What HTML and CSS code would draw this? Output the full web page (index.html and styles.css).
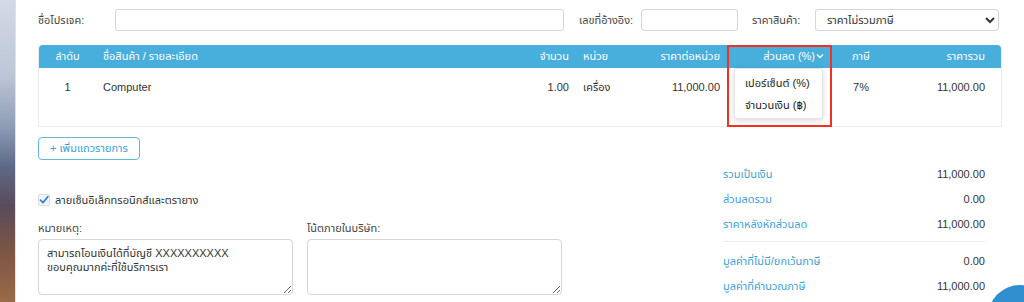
FILE: index.html
```html
<!DOCTYPE html>
<html lang="th">
<head>
    <meta charset="UTF-8">
    <meta name="viewport" content="width=device-width, initial-scale=1.0">
    <title>ใบเสนอราคา</title>
    <link rel="stylesheet" href="styles.css">
</head>
<body>
    <div class="page">
        <div class="backdrop"></div>

        <main class="card">
            <div class="doc-row">
                <label class="lbl lbl-project">ชื่อโปรเจค:</label>
                <input class="field field-project" type="text">
                <label class="lbl lbl-ref">เลขที่อ้างอิง:</label>
                <input class="field field-ref" type="text">
                <label class="lbl lbl-price">ราคาสินค้า:</label>
                <select class="field field-price">
                    <option>ราคาไม่รวมภาษี</option>
                </select>
            </div>

            <div class="items">
                <table class="items-table">
                    <colgroup>
                        <col style="width: 57px">
                        <col style="width: 425px">
                        <col style="width: 55px">
                        <col style="width: 55px">
                        <col style="width: 96px">
                        <col style="width: 104px">
                        <col style="width: 60px">
                        <col style="width: 110px">
                    </colgroup>
                    <thead>
                        <tr>
                            <th class="center">ลำดับ</th>
                            <th>ชื่อสินค้า / รายละเอียด</th>
                            <th class="right">จำนวน</th>
                            <th>หน่วย</th>
                            <th class="right">ราคาต่อหน่วย</th>
                            <th class="right">ส่วนลด (%)<svg class="chev" width="8" height="6" viewBox="0 0 8 6"><path d="M1 1.5 L4 4.5 L7 1.5" fill="none" stroke="#fff" stroke-width="1.4"/></svg></th>
                            <th class="center">ภาษี</th>
                            <th class="right last">ราคารวม</th>
                        </tr>
                    </thead>
                    <tbody>
                        <tr>
                            <td class="center">1</td>
                            <td>Computer</td>
                            <td class="right">1.00</td>
                            <td>เครื่อง</td>
                            <td class="right">11,000.00</td>
                            <td></td>
                            <td class="center">7%</td>
                            <td class="right last">11,000.00</td>
                        </tr>
                    </tbody>
                </table>

                <div class="discount-menu">
                    <div class="menu-item">เปอร์เซ็นต์ (%)</div>
                    <div class="menu-item">จำนวนเงิน (฿)</div>
                </div>
                <div class="highlight"></div>
            </div>

            <button class="add-row">+ เพิ่มแถวรายการ</button>

            <div class="lower">
                <div class="notes">
                    <div class="check-row">
                        <span class="check-box">
                            <svg width="12" height="12" viewBox="0 0 12 12"><path d="M2.5 6.2 L5 8.6 L9.8 2.8" fill="none" stroke="#2f86d6" stroke-width="1.8" stroke-linecap="round" stroke-linejoin="round"/></svg>
                        </span>
                        <span>ลายเซ็นอิเล็กทรอนิกส์และตรายาง</span>
                    </div>
                    <div class="note-grid">
                        <div class="note">
                            <label class="lbl">หมายเหตุ:</label>
                            <textarea class="note-box">สามารถโอนเงินได้ที่บัญชี XXXXXXXXXX
ขอบคุณมากค่ะที่ใช้บริการเรา</textarea>
                        </div>
                        <div class="note">
                            <label class="lbl">โน้ตภายในบริษัท:</label>
                            <textarea class="note-box"></textarea>
                        </div>
                    </div>
                </div>

                <div class="summary">
                    <div class="sum-row"><span class="sum-label">รวมเป็นเงิน</span><span>11,000.00</span></div>
                    <div class="sum-row"><span class="sum-label">ส่วนลดรวม</span><span>0.00</span></div>
                    <div class="sum-row"><span class="sum-label">ราคาหลังหักส่วนลด</span><span>11,000.00</span></div>
                    <div class="sum-divider"></div>
                    <div class="sum-row"><span class="sum-label">มูลค่าที่ไม่มี/ยกเว้นภาษี</span><span>0.00</span></div>
                    <div class="sum-row"><span class="sum-label">มูลค่าที่คำนวณภาษี</span><span>11,000.00</span></div>
                </div>
            </div>
        </main>

        <div class="gutter"></div>
    </div>

    <div class="chat-bubble"></div>
</body>
</html>
```

FILE: styles.css
```css
body {
    margin: 0;
    font-family: "Liberation Sans", "Noto Sans Thai", "Noto Sans", sans-serif;
    font-size: 11px;
    color: #333;
    overflow: hidden;
    height: 302px;
}

.page {
    display: flex;
    height: 302px;
}

.backdrop {
    width: 15px;
    flex-shrink: 0;
    background: linear-gradient(180deg, #d3dae6 0%, #bcc6d6 25%, #8e9cb6 42%, #5e6a88 55%, #5a4b5c 68%, #7a5444 82%, #9a6a48 100%);
}

.card {
    width: 975px;
    flex-shrink: 0;
    background: #fff;
    border-left: 1px solid #e1e1e1;
    border-right: 1px solid #e6e6e6;
    padding: 9px 13px 0 22px;
}

.gutter {
    flex: 1;
    background: #fafafa;
}

/* top row */
.doc-row {
    display: flex;
    align-items: center;
    height: 22px;
}

.lbl {
    color: #444;
    line-height: 14px;
}

.lbl-project { width: 77px; }
.lbl-ref { width: 62px; margin-left: 15px; }
.lbl-price { width: 63px; margin-left: 14px; }

.field {
    box-sizing: border-box;
    height: 22px;
    border: 1px solid #d6d6d6;
    border-radius: 3px;
    background: #fff;
    font-family: inherit;
    font-size: 11px;
    color: #333;
    padding: 0 7px;
}

.field-project { width: 449px; }
.field-ref { width: 97px; }
.field-price { width: 184px; }

/* items table */
.items {
    position: relative;
    margin-top: 14px;
    width: 962px;
}

.items-table {
    width: 962px;
    table-layout: fixed;
    border-collapse: separate;
    border-spacing: 0;
    border: 1px solid #ececec;
    border-top: none;
    border-radius: 4px 4px 0 0;
}

.items-table th {
    background: #48aedb;
    color: #fff;
    font-weight: normal;
    height: 23px;
    padding: 0 7px;
    text-align: left;
    white-space: nowrap;
}

.items-table thead tr th:first-child { border-top-left-radius: 4px; }
.items-table thead tr th:last-child { border-top-right-radius: 4px; }

.items-table td {
    height: 58px;
    padding: 12px 7px 0;
    vertical-align: top;
    line-height: 14px;
    box-sizing: border-box;
}

.items-table .center { text-align: center; }
.items-table .right { text-align: right; }
.items-table .last { padding-right: 16px; }

.chev {
    margin-left: 1px;
    vertical-align: 1px;
}

.discount-menu {
    position: absolute;
    left: 696px;
    top: 23px;
    width: 89px;
    box-sizing: border-box;
    padding: 3px 0 2px;
    background: #fff;
    border: 1px solid #e4e4e4;
    border-radius: 3px;
    box-shadow: 0 2px 6px rgba(0, 0, 0, 0.15);
}

.menu-item {
    padding: 0 10px;
    line-height: 22px;
    color: #222;
    white-space: nowrap;
}

.highlight {
    position: absolute;
    left: 689px;
    top: 0;
    width: 105px;
    height: 82px;
    box-sizing: border-box;
    border: 2px solid #f2311f;
}

/* add row button */
.add-row {
    display: block;
    margin-top: 10px;
    width: 102px;
    height: 23px;
    padding: 0;
    background: #fff;
    border: 1px solid #62b6de;
    border-radius: 4px;
    color: #3a9ed4;
    font-family: inherit;
    font-size: 11px;
}

/* notes + summary */
.lower {
    display: flex;
    justify-content: space-between;
    width: 962px;
}

.notes {
    width: 524px;
    padding-top: 33px;
}

.check-row {
    display: flex;
    align-items: center;
    gap: 5px;
    height: 14px;
}

.check-box {
    display: flex;
    width: 12px;
    height: 12px;
    box-sizing: border-box;
    border: 1px solid #dcdcdc;
    border-radius: 2px;
    background: #f4f4f4;
}

.check-box svg {
    margin: -1px;
}

.note-grid {
    display: grid;
    grid-template-columns: 255px 255px;
    gap: 14px;
    margin-top: 14px;
}

.note {
    display: flex;
    flex-direction: column;
    gap: 4px;
}

.note-box {
    box-sizing: border-box;
    height: 56px;
    border: 1px solid #d6d6d6;
    border-radius: 4px;
    padding: 6px 8px;
    font-family: inherit;
    font-size: 11px;
    line-height: 14px;
    color: #333;
}

.summary {
    width: 262px;
    margin-right: 15px;
    padding-top: 1.5px;
}

.sum-row {
    display: flex;
    justify-content: space-between;
    line-height: 25px;
}

.sum-label {
    color: #3d9fd6;
}

.sum-divider {
    height: 1px;
    background: #eeeeee;
    margin: 4px 0 7px;
}

.chat-bubble {
    position: fixed;
    left: 988px;
    top: 285px;
    width: 64px;
    height: 64px;
    border-radius: 50%;
    background: #2f8fcf;
}
```
